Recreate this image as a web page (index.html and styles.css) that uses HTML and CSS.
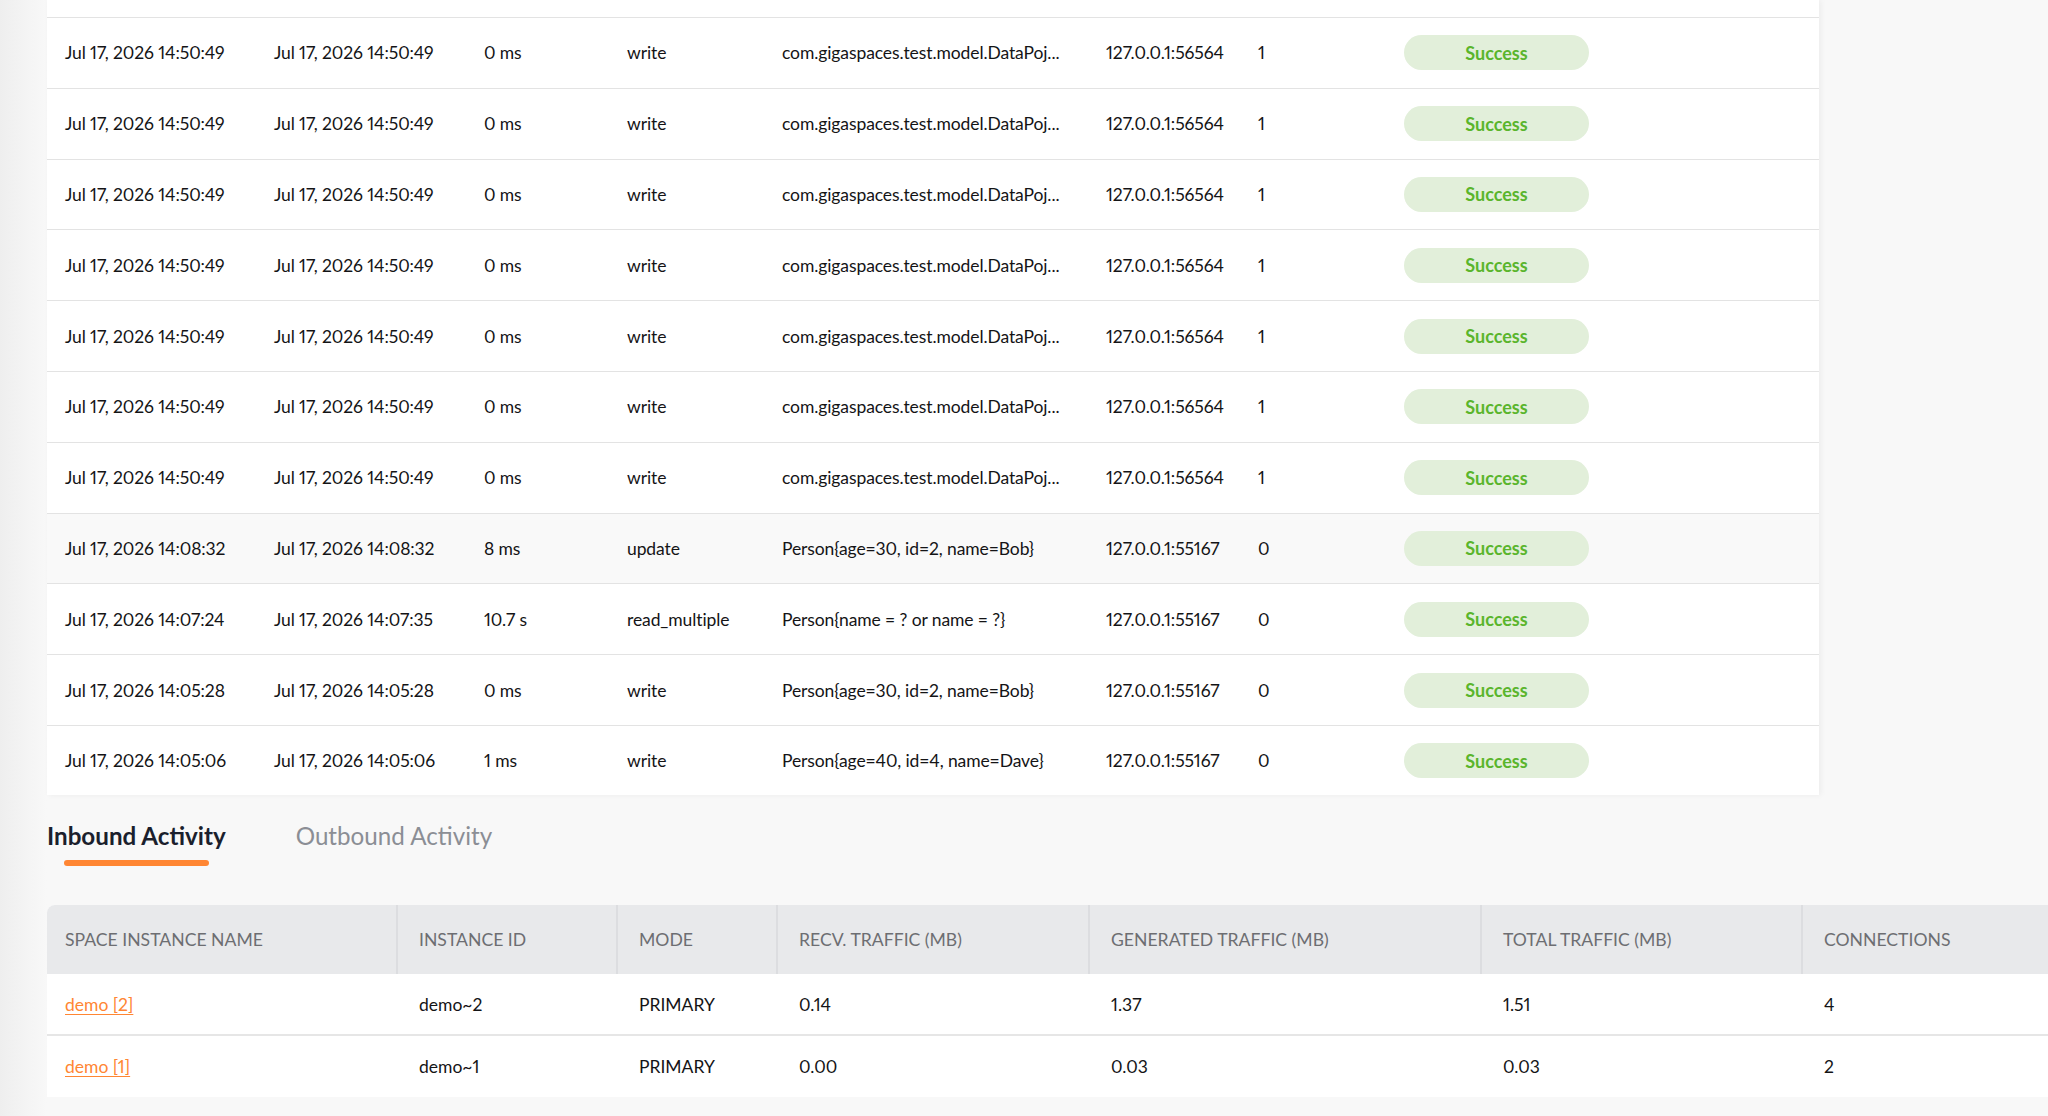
FILE: index.html
```html
<!DOCTYPE html>
<html lang="en">
<head>
<meta charset="utf-8">
<title>Space Activity</title>
<link rel="stylesheet" href="styles.css">
</head>
<body>
<main class="page">
  <section class="log">
    <div class="log-row log-row--partial"></div>
    <div class="log-row"><span>Jul 17, 2026 14:50:49</span><span>Jul 17, 2026 14:50:49</span><span>0 ms</span><span>write</span><span>com.gigaspaces.test.model.DataPoj...</span><span>127.0.0.1:56564</span><span>1</span><span><em class="badge">Success</em></span></div>
    <div class="log-row"><span>Jul 17, 2026 14:50:49</span><span>Jul 17, 2026 14:50:49</span><span>0 ms</span><span>write</span><span>com.gigaspaces.test.model.DataPoj...</span><span>127.0.0.1:56564</span><span>1</span><span><em class="badge">Success</em></span></div>
    <div class="log-row"><span>Jul 17, 2026 14:50:49</span><span>Jul 17, 2026 14:50:49</span><span>0 ms</span><span>write</span><span>com.gigaspaces.test.model.DataPoj...</span><span>127.0.0.1:56564</span><span>1</span><span><em class="badge">Success</em></span></div>
    <div class="log-row"><span>Jul 17, 2026 14:50:49</span><span>Jul 17, 2026 14:50:49</span><span>0 ms</span><span>write</span><span>com.gigaspaces.test.model.DataPoj...</span><span>127.0.0.1:56564</span><span>1</span><span><em class="badge">Success</em></span></div>
    <div class="log-row"><span>Jul 17, 2026 14:50:49</span><span>Jul 17, 2026 14:50:49</span><span>0 ms</span><span>write</span><span>com.gigaspaces.test.model.DataPoj...</span><span>127.0.0.1:56564</span><span>1</span><span><em class="badge">Success</em></span></div>
    <div class="log-row"><span>Jul 17, 2026 14:50:49</span><span>Jul 17, 2026 14:50:49</span><span>0 ms</span><span>write</span><span>com.gigaspaces.test.model.DataPoj...</span><span>127.0.0.1:56564</span><span>1</span><span><em class="badge">Success</em></span></div>
    <div class="log-row"><span>Jul 17, 2026 14:50:49</span><span>Jul 17, 2026 14:50:49</span><span>0 ms</span><span>write</span><span>com.gigaspaces.test.model.DataPoj...</span><span>127.0.0.1:56564</span><span>1</span><span><em class="badge">Success</em></span></div>
    <div class="log-row log-row--hover"><span>Jul 17, 2026 14:08:32</span><span>Jul 17, 2026 14:08:32</span><span>8 ms</span><span>update</span><span>Person{age=30, id=2, name=Bob}</span><span>127.0.0.1:55167</span><span>0</span><span><em class="badge">Success</em></span></div>
    <div class="log-row"><span>Jul 17, 2026 14:07:24</span><span>Jul 17, 2026 14:07:35</span><span>10.7 s</span><span>read_multiple</span><span>Person{name = ? or name = ?}</span><span>127.0.0.1:55167</span><span>0</span><span><em class="badge">Success</em></span></div>
    <div class="log-row"><span>Jul 17, 2026 14:05:28</span><span>Jul 17, 2026 14:05:28</span><span>0 ms</span><span>write</span><span>Person{age=30, id=2, name=Bob}</span><span>127.0.0.1:55167</span><span>0</span><span><em class="badge">Success</em></span></div>
    <div class="log-row"><span>Jul 17, 2026 14:05:06</span><span>Jul 17, 2026 14:05:06</span><span>1 ms</span><span>write</span><span>Person{age=40, id=4, name=Dave}</span><span>127.0.0.1:55167</span><span>0</span><span><em class="badge">Success</em></span></div>
  </section>

  <nav class="tabs">
    <div class="tab tab--active"><span class="tab-label">Inbound Activity</span><i class="tab-bar"></i></div>
    <div class="tab"><span class="tab-label">Outbound Activity</span></div>
  </nav>

  <section class="traffic">
    <div class="traffic-row traffic-head">
      <span>SPACE INSTANCE NAME</span><span>INSTANCE ID</span><span>MODE</span><span>RECV. TRAFFIC (MB)</span><span>GENERATED TRAFFIC (MB)</span><span>TOTAL TRAFFIC (MB)</span><span>CONNECTIONS</span>
    </div>
    <div class="traffic-row traffic-body">
      <span><a class="link" href="#">demo [2]</a></span><span>demo~2</span><span>PRIMARY</span><span>0.14</span><span>1.37</span><span>1.51</span><span>4</span>
    </div>
    <div class="traffic-row traffic-body traffic-last">
      <span><a class="link" href="#">demo [1]</a></span><span>demo~1</span><span>PRIMARY</span><span>0.00</span><span>0.03</span><span>0.03</span><span>2</span>
    </div>
  </section>
</main>
</body>
</html>
```

FILE: styles.css
```css
* { box-sizing: border-box; }

html, body {
  margin: 0;
  height: 100%;
  overflow: hidden;
}

body {
  background: linear-gradient(to right, #eeeeee 0, #f5f5f5 30px, #f8f8f8 47px, #f8f8f8 100%);
  font-family: Lato, "Liberation Sans", sans-serif;
  font-variant-numeric: proportional-nums;
  color: #141416;
  font-size: 17.5px;
}

.page {
  padding-left: 47px;
}

/* ---------- operations log ---------- */
.log {
  width: 1772px;
  background: #ffffff;
  box-shadow: 2px 0 6px rgba(0, 0, 0, 0.05);
}

.log-row {
  display: grid;
  grid-template-columns: 209px 210px 143px 155px 324px 152px 146px 1fr;
  align-items: center;
  height: 70.8px;
  border-bottom: 1.5px solid #e3e3e3;
}

.log-row:last-child {
  border-bottom: 0;
  height: 69.3px;
}

.log-row--partial {
  height: 18px;
}

.log-row--hover {
  background: #f9f9f9;
}

.log-row > span {
  padding-left: 18px;
  white-space: nowrap;
  overflow: hidden;
  letter-spacing: -0.1px;
}

.badge {
  display: inline-flex;
  align-items: center;
  justify-content: center;
  width: 185px;
  height: 35px;
  border-radius: 18px;
  background: #e2efda;
  color: #5ab52c;
  font-style: normal;
  font-weight: 700;
  font-size: 18px;
  letter-spacing: 0;
}

/* ---------- tabs ---------- */
.tabs {
  display: flex;
  gap: 70px;
  margin-top: 26px;
  height: 70px;
}

.tab {
  display: flex;
  flex-direction: column;
  align-items: center;
}

.tab-label {
  font-size: 24.2px;
  line-height: 30px;
  color: #8b8e95;
}

.tab--active .tab-label {
  font-weight: 700;
  color: #1b1f2d;
}

.tab-bar {
  display: block;
  width: 81%;
  height: 5.5px;
  margin-top: 9px;
  border-radius: 3px;
  background: #ff8633;
}

/* ---------- traffic table ---------- */
.traffic {
  margin-top: 14px;
  background: #ffffff;
  border-top-left-radius: 8px;
  overflow: hidden;
}

.traffic-row {
  display: grid;
  grid-template-columns: 349px 220px 160px 312px 392px 321px 1fr;
  align-items: stretch;
}

.traffic-row > span {
  display: flex;
  align-items: center;
  padding-left: 21px;
  white-space: nowrap;
}

.traffic-row > span:first-child {
  padding-left: 18px;
}

.traffic-head {
  height: 69px;
  background: #e8e9eb;
  color: #6d6e72;
  font-size: 17.6px;
}

.traffic-head > span + span {
  border-left: 2px solid #dcdde0;
}

.traffic-body {
  height: 62px;
  border-bottom: 2px solid #e6e6e6;
}

.traffic-body > span + span {
  padding-left: 23px;
}

.traffic-last {
  height: 61px;
  border-bottom: 0;
}

.link {
  color: #ff8633;
  text-decoration: underline;
  text-underline-offset: 3px;
}
```
